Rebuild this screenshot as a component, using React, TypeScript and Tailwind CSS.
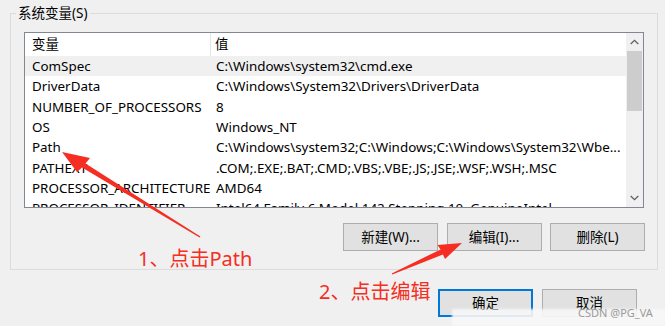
import React from 'react'

const rows: [string, string][] = [
  ['ComSpec', 'C:\\Windows\\system32\\cmd.exe'],
  ['DriverData', 'C:\\Windows\\System32\\Drivers\\DriverData'],
  ['NUMBER_OF_PROCESSORS', '8'],
  ['OS', 'Windows_NT'],
  ['Path', 'C:\\Windows\\system32;C:\\Windows;C:\\Windows\\System32\\Wbe...'],
  ['PATHEXT', '.COM;.EXE;.BAT;.CMD;.VBS;.VBE;.JS;.JSE;.WSF;.WSH;.MSC'],
  ['PROCESSOR_ARCHITECTURE', 'AMD64'],
  ['PROCESSOR_IDENTIFIER', 'Intel64 Family 6 Model 142 Stepping 10, GenuineIntel'],
]

function Btn({ label, primary }: { label: string; primary?: boolean }) {
  return (
    <button
      className={`h-[28px] w-[95px] bg-[#e1e1e1] text-[13.5px] text-black flex items-center justify-center ${
        primary ? 'border-2 border-[#0078d7]' : 'border border-[#adadad]'
      }`}
    >
      {label}
    </button>
  )
}

function Arrows() {
  return (
    <svg className="absolute inset-0 pointer-events-none" width="665" height="326" viewBox="0 0 665 326">
      <polygon
        fill="#f52d22"
        points="62,152 90,158 85.5,163.5 200.4,236.4 199.6,237.6 82,167.5 77,172"
      />
      <polygon
        fill="#f52d22"
        points="462,243 445,259 442.9,254.6 392.3,274.6 391.7,273.4 440.6,249.4 437.5,245"
      />
    </svg>
  )
}

export default function App() {
  return (
    <div
      className="relative w-[665px] h-[326px] overflow-hidden bg-[#f0f0f0] text-black"
      style={{ fontFamily: '"Noto Sans", "Noto Sans CJK SC", sans-serif' }}
    >
      <fieldset className="mx-[10px] mt-[3px] w-[648px] h-[267px] border border-[#dcdcdc] p-0">
        <legend className="ml-[5px] px-[2px] text-[13.5px] leading-[20px]">系统变量(S)</legend>

        <div className="mt-[9px] ml-[13px] w-[620px] h-[176px] border border-[#828790] bg-white flex overflow-hidden">
          <div className="flex-1 min-w-0 overflow-hidden text-[13.4px] whitespace-nowrap">
            <div className="flex h-[23px] items-center">
              <div className="w-[186px] shrink-0 h-full pl-[7px] flex items-center border-r border-[#e5e5e5]">变量</div>
              <div className="pl-[4px]">值</div>
            </div>
            {rows.map(([k, v], i) => (
              <div
                key={k}
                className={`flex h-[20.3px] items-center ${i === 0 ? 'bg-[#f0f0f0]' : ''}`}
              >
                <div className="w-[186px] shrink-0 pl-[7px] overflow-hidden">{k}</div>
                <div className="pl-[5px]">{v}</div>
              </div>
            ))}
          </div>
          <div className="w-[17px] shrink-0 bg-[#f0f0f0] flex flex-col items-center">
            <div className="h-[18px] flex items-center justify-center text-[#606060]">
              <svg width="9" height="6" viewBox="0 0 9 6">
                <path d="M0.7 5 L4.5 1.3 L8.3 5" fill="none" stroke="currentColor" strokeWidth="1.3" />
              </svg>
            </div>
            <div className="w-[15px] h-[60px] bg-[#cdcdcd]" />
            <div className="flex-1" />
            <div className="h-[19px] flex items-center justify-center text-[#606060]">
              <svg width="9" height="6" viewBox="0 0 9 6">
                <path d="M0.7 1 L4.5 4.7 L8.3 1" fill="none" stroke="currentColor" strokeWidth="1.3" />
              </svg>
            </div>
          </div>
        </div>

        <div className="mt-[15px] mr-[12px] flex justify-end gap-[8.5px]">
          <Btn label="新建(W)..." />
          <Btn label="编辑(I)..." />
          <Btn label="删除(L)" />
        </div>
      </fieldset>

      <div className="mt-[19px] mr-[28px] flex justify-end gap-[9px]">
        <Btn label="确定" primary />
        <Btn label="取消" />
      </div>

      <Arrows />

      <div className="absolute left-[138px] top-[246px] text-[20px] leading-[26px] text-[#f52d22]">
        1、点击Path
      </div>
      <div className="absolute left-[319px] top-[279px] text-[20px] leading-[26px] text-[#f52d22]">
        2、点击编辑
      </div>

      <div className="absolute left-[452px] top-[309px] w-[213px] h-[17px] bg-[#f7f7f7]/90 blur-[1px]" />
      <div className="absolute left-[578px] top-[306px] text-[11px] leading-[14px] text-[#9a9a9a]">
        CSDN @PG_VA
      </div>
    </div>
  )
}
